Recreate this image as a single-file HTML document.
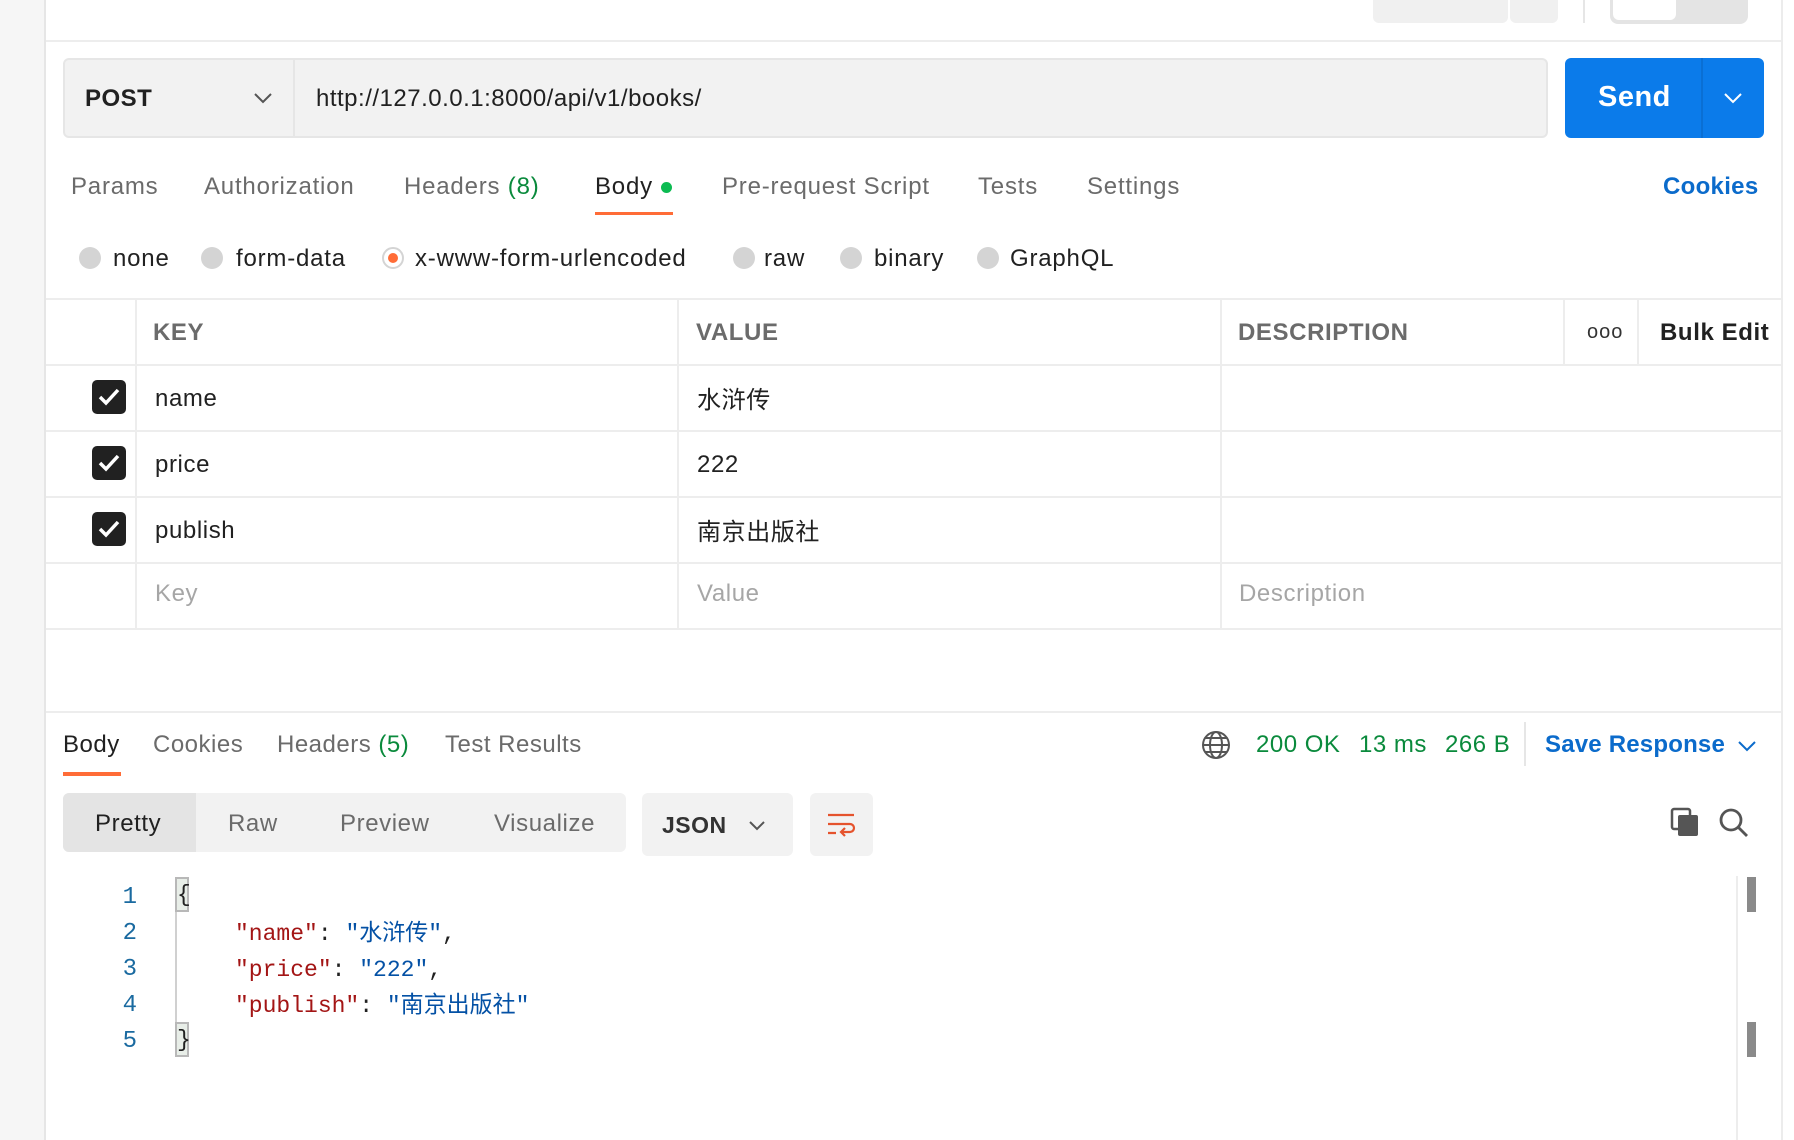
<!DOCTYPE html>
<html><head><meta charset="utf-8"><style>
*{box-sizing:border-box;margin:0;padding:0}
body{width:1794px;height:1140px;background:#fff;font-family:"Liberation Sans","Noto Sans CJK SC",sans-serif;color:#212121;position:relative;overflow:hidden}
.a{position:absolute;white-space:nowrap}
.t{font-size:24px;color:#6b6b6b;top:173px;letter-spacing:0.8px;line-height:28px}
.rd{position:absolute;width:22px;height:22px;border-radius:50%;background:#d4d4d4;top:247px}
.rl{font-size:24px;color:#212121;top:245px;letter-spacing:0.8px;line-height:28px}
.cb{position:absolute;left:92px;width:34px;height:34px;background:#212121;border-radius:5px}
.cb svg{position:absolute;left:5px;top:6px}
.hl{position:absolute;height:2px;background:#ededed;left:46px;width:1735px}
.vl{position:absolute;width:2px;background:#ededed;top:299px;height:330px}
.cell{font-size:24px;color:#212121;letter-spacing:0.6px;line-height:28px}
.code{font-family:"Liberation Mono","Noto Sans CJK SC",monospace;font-size:23px;line-height:30px;height:30px}
.ln{color:#1a6aa0;left:117px;font-size:24px;width:20px;text-align:right}
</style></head><body>
<div class="a" style="left:0;top:0;width:46px;height:1140px;background:#f6f6f6;border-right:2px solid #e6e6e6"></div>
<div class="a" style="left:1781px;top:0;width:13px;height:1140px;background:#fff;border-left:2px solid #ececec"></div>
<div class="hl" style="top:40px"></div>
<div class="a" style="left:1373px;top:0;width:135px;height:23px;background:#f0f0f0;border-radius:0 0 6px 6px"></div>
<div class="a" style="left:1510px;top:0;width:48px;height:23px;background:#f0f0f0;border-radius:0 0 6px 6px"></div>
<div class="a" style="left:1583px;top:0;width:2px;height:23px;background:#e6e6e6"></div>
<div class="a" style="left:1610px;top:0;width:138px;height:24px;background:#e4e4e4;border-radius:0 0 8px 8px"></div>
<div class="a" style="left:1613px;top:0;width:63px;height:20px;background:#fff;border-radius:0 0 6px 6px"></div>

<div class="a" style="left:63px;top:58px;width:1485px;height:80px;background:#f2f2f2;border:2px solid #e6e6e6;border-radius:6px"></div>
<div class="a" style="left:293px;top:60px;width:2px;height:76px;background:#e6e6e6"></div>
<div class="a" style="left:85px;top:85px;font-size:24px;font-weight:bold;letter-spacing:0.5px">POST</div>
<svg class="a" style="left:253px;top:92px" width="20" height="12"><path d="M2 2l8 8 8-8" stroke="#555" stroke-width="2" fill="none"/></svg>
<div class="a" style="left:316px;top:85px;font-size:24px;letter-spacing:0.5px">http://127.0.0.1:8000/api/v1/books/</div>
<div class="a" style="left:1565px;top:58px;width:199px;height:80px;background:#0b7bea;border-radius:6px"></div>
<div class="a" style="left:1701px;top:58px;width:2px;height:80px;background:#0a6fd4"></div>
<div class="a" style="left:1598px;top:81px;font-size:29px;font-weight:bold;color:#fff;letter-spacing:0.5px">Send</div>
<svg class="a" style="left:1723px;top:92px" width="20" height="12"><path d="M2 2l8 8 8-8" stroke="#fff" stroke-width="2" fill="none"/></svg>

<div class="a t" style="left:71px">Params</div>
<div class="a t" style="left:204px">Authorization</div>
<div class="a t" style="left:404px">Headers <span style="color:#0a8a3c">(8)</span></div>
<div class="a t" style="left:595px;color:#212121">Body</div>
<div class="a" style="left:661px;top:182px;width:11px;height:11px;border-radius:50%;background:#0cbb52"></div>
<div class="a" style="left:595px;top:212px;width:78px;height:3px;background:#ff6c37"></div>
<div class="a t" style="left:722px">Pre-request Script</div>
<div class="a t" style="left:978px">Tests</div>
<div class="a t" style="left:1087px">Settings</div>
<div class="a t" style="left:1663px;color:#0b6bcb;font-weight:bold;letter-spacing:0.3px">Cookies</div>

<div class="rd" style="left:79px"></div><div class="a rl" style="left:113px">none</div>
<div class="rd" style="left:201px"></div><div class="a rl" style="left:236px">form-data</div>
<div class="rd" style="left:382px;background:#fff;border:2px solid #d4d4d4"></div><div class="a" style="left:388px;top:253px;width:10px;height:10px;border-radius:50%;background:#ff6c37"></div><div class="a rl" style="left:415px">x-www-form-urlencoded</div>
<div class="rd" style="left:733px"></div><div class="a rl" style="left:764px">raw</div>
<div class="rd" style="left:840px"></div><div class="a rl" style="left:874px">binary</div>
<div class="rd" style="left:977px"></div><div class="a rl" style="left:1010px">GraphQL</div>

<div class="hl" style="top:298px"></div>
<div class="hl" style="top:364px"></div>
<div class="hl" style="top:430px"></div>
<div class="hl" style="top:496px"></div>
<div class="hl" style="top:562px"></div>
<div class="hl" style="top:628px"></div>
<div class="vl" style="left:135px"></div>
<div class="vl" style="left:677px"></div>
<div class="vl" style="left:1220px"></div>
<div class="vl" style="left:1563px;height:66px"></div>
<div class="vl" style="left:1637px;height:66px"></div>
<div class="a cell" style="left:153px;top:319px;color:#6b6b6b;font-weight:bold">KEY</div>
<div class="a cell" style="left:696px;top:319px;color:#6b6b6b;font-weight:bold">VALUE</div>
<div class="a cell" style="left:1238px;top:319px;color:#6b6b6b;font-weight:bold">DESCRIPTION</div>
<div class="a" style="left:1587px;top:321px;font-size:20px;letter-spacing:1px;color:#333">ooo</div>
<div class="a cell" style="left:1660px;top:319px;font-weight:bold">Bulk Edit</div>

<div class="cb" style="top:380px"><svg width="24" height="22"><path d="M3 11l6 6L21 4" stroke="#fff" stroke-width="3.5" fill="none"/></svg></div>
<div class="cb" style="top:446px"><svg width="24" height="22"><path d="M3 11l6 6L21 4" stroke="#fff" stroke-width="3.5" fill="none"/></svg></div>
<div class="cb" style="top:512px"><svg width="24" height="22"><path d="M3 11l6 6L21 4" stroke="#fff" stroke-width="3.5" fill="none"/></svg></div>
<div class="a cell" style="left:155px;top:385px">name</div>
<div class="a cell" style="left:697px;top:381px;font-family:'Noto Sans CJK SC',sans-serif;line-height:34px">水浒传</div>
<div class="a cell" style="left:155px;top:451px">price</div>
<div class="a cell" style="left:697px;top:451px">222</div>
<div class="a cell" style="left:155px;top:517px">publish</div>
<div class="a cell" style="left:697px;top:513px;font-family:'Noto Sans CJK SC',sans-serif;line-height:34px">南京出版社</div>
<div class="a cell" style="left:155px;top:580px;color:#a6a6a6">Key</div>
<div class="a cell" style="left:697px;top:580px;color:#a6a6a6">Value</div>
<div class="a cell" style="left:1239px;top:580px;color:#a6a6a6">Description</div>

<div class="hl" style="top:711px"></div>
<div class="a t" style="left:63px;top:731px;color:#212121;letter-spacing:0.5px">Body</div>
<div class="a" style="left:63px;top:772px;width:58px;height:4px;background:#ff6c37"></div>
<div class="a t" style="left:153px;top:731px;letter-spacing:0.5px">Cookies</div>
<div class="a t" style="left:277px;top:731px;letter-spacing:0.5px">Headers <span style="color:#0a8a3c">(5)</span></div>
<div class="a t" style="left:445px;top:731px;letter-spacing:0.5px">Test Results</div>
<svg class="a" style="left:1201px;top:730px" width="30" height="30" viewBox="0 0 30 30" fill="none" stroke="#555" stroke-width="2"><circle cx="15" cy="15" r="13"/><ellipse cx="15" cy="15" rx="6" ry="13"/><path d="M2 15h26M4 8h22M4 22h22"/></svg>
<div class="a t" style="left:1256px;top:731px;color:#0a8a3c;letter-spacing:0.5px">200 OK</div>
<div class="a t" style="left:1359px;top:731px;color:#0a8a3c;letter-spacing:0.5px">13 ms</div>
<div class="a t" style="left:1445px;top:731px;color:#0a8a3c;letter-spacing:0.5px">266 B</div>
<div class="a" style="left:1524px;top:722px;width:2px;height:44px;background:#e6e6e6"></div>
<div class="a t" style="left:1545px;top:731px;color:#0b6bcb;font-weight:bold;letter-spacing:0.2px">Save Response</div>
<svg class="a" style="left:1737px;top:740px" width="20" height="12"><path d="M2 2l8 8 8-8" stroke="#0b6bcb" stroke-width="2" fill="none"/></svg>

<div class="a" style="left:63px;top:793px;width:563px;height:59px;background:#f2f2f2;border-radius:6px"></div>
<div class="a" style="left:63px;top:793px;width:133px;height:59px;background:#e4e4e4;border-radius:6px 0 0 6px"></div>
<div class="a t" style="left:95px;top:810px;color:#212121;letter-spacing:0.6px">Pretty</div>
<div class="a t" style="left:228px;top:810px;letter-spacing:0.6px">Raw</div>
<div class="a t" style="left:340px;top:810px;letter-spacing:0.6px">Preview</div>
<div class="a t" style="left:494px;top:810px;letter-spacing:0.6px">Visualize</div>
<div class="a" style="left:642px;top:793px;width:151px;height:63px;background:#f2f2f2;border-radius:6px"></div>
<div class="a" style="left:662px;top:812px;font-size:23px;font-weight:bold;color:#333;letter-spacing:0.5px">JSON</div>
<svg class="a" style="left:748px;top:820px" width="18" height="11"><path d="M2 2l7 7 7-7" stroke="#555" stroke-width="2" fill="none"/></svg>
<div class="a" style="left:810px;top:793px;width:63px;height:63px;background:#f2f2f2;border-radius:6px"></div>
<div class="a" style="left:1736px;top:876px;width:2px;height:264px;background:#ededed"></div>
<svg class="a" style="left:826px;top:811px" width="32" height="28" fill="none" stroke="#e5532d" stroke-width="2.2"><path d="M2 4h26M2 13h22a4 4 0 0 1 0 8h-8M19 17l-4 4 4 4M2 22h8"/></svg>
<svg class="a" style="left:1670px;top:807px" width="30" height="30" fill="#555"><rect x="2" y="2" width="18" height="20" rx="2" fill="none" stroke="#555" stroke-width="2.5"/><rect x="8" y="8" width="20" height="21" rx="2"/></svg>
<svg class="a" style="left:1718px;top:807px" width="32" height="32" fill="none" stroke="#555" stroke-width="2.8"><circle cx="13" cy="13" r="10"/><path d="M20 20l9 9"/></svg>

<div class="a code ln" style="top:883px">1</div>
<div class="a code ln" style="top:919px">2</div>
<div class="a code ln" style="top:955px">3</div>
<div class="a code ln" style="top:991px">4</div>
<div class="a code ln" style="top:1027px">5</div>
<div class="a" style="left:175px;top:877px;width:2px;height:180px;background:#d0d0d0"></div>
<div class="a code" style="left:175px;top:877px;width:14px;height:35px;background:#e8eee8;border:2px solid #b8b8b8;line-height:32px">{</div>
<div class="a code" style="left:175px;top:1022px;width:14px;height:35px;background:#e8eee8;border:2px solid #b8b8b8;line-height:32px">}</div>
<div class="a code" style="left:235px;top:919px"><span style="color:#a31515">"name"</span>: <span style="color:#0451a5">"水浒传"</span>,</div>
<div class="a code" style="left:235px;top:955px"><span style="color:#a31515">"price"</span>: <span style="color:#0451a5">"222"</span>,</div>
<div class="a code" style="left:235px;top:991px"><span style="color:#a31515">"publish"</span>: <span style="color:#0451a5">"南京出版社"</span></div>
<div class="a" style="left:1747px;top:877px;width:9px;height:35px;background:#8a8a8a"></div>
<div class="a" style="left:1747px;top:1022px;width:9px;height:35px;background:#8a8a8a"></div>
</body></html>
